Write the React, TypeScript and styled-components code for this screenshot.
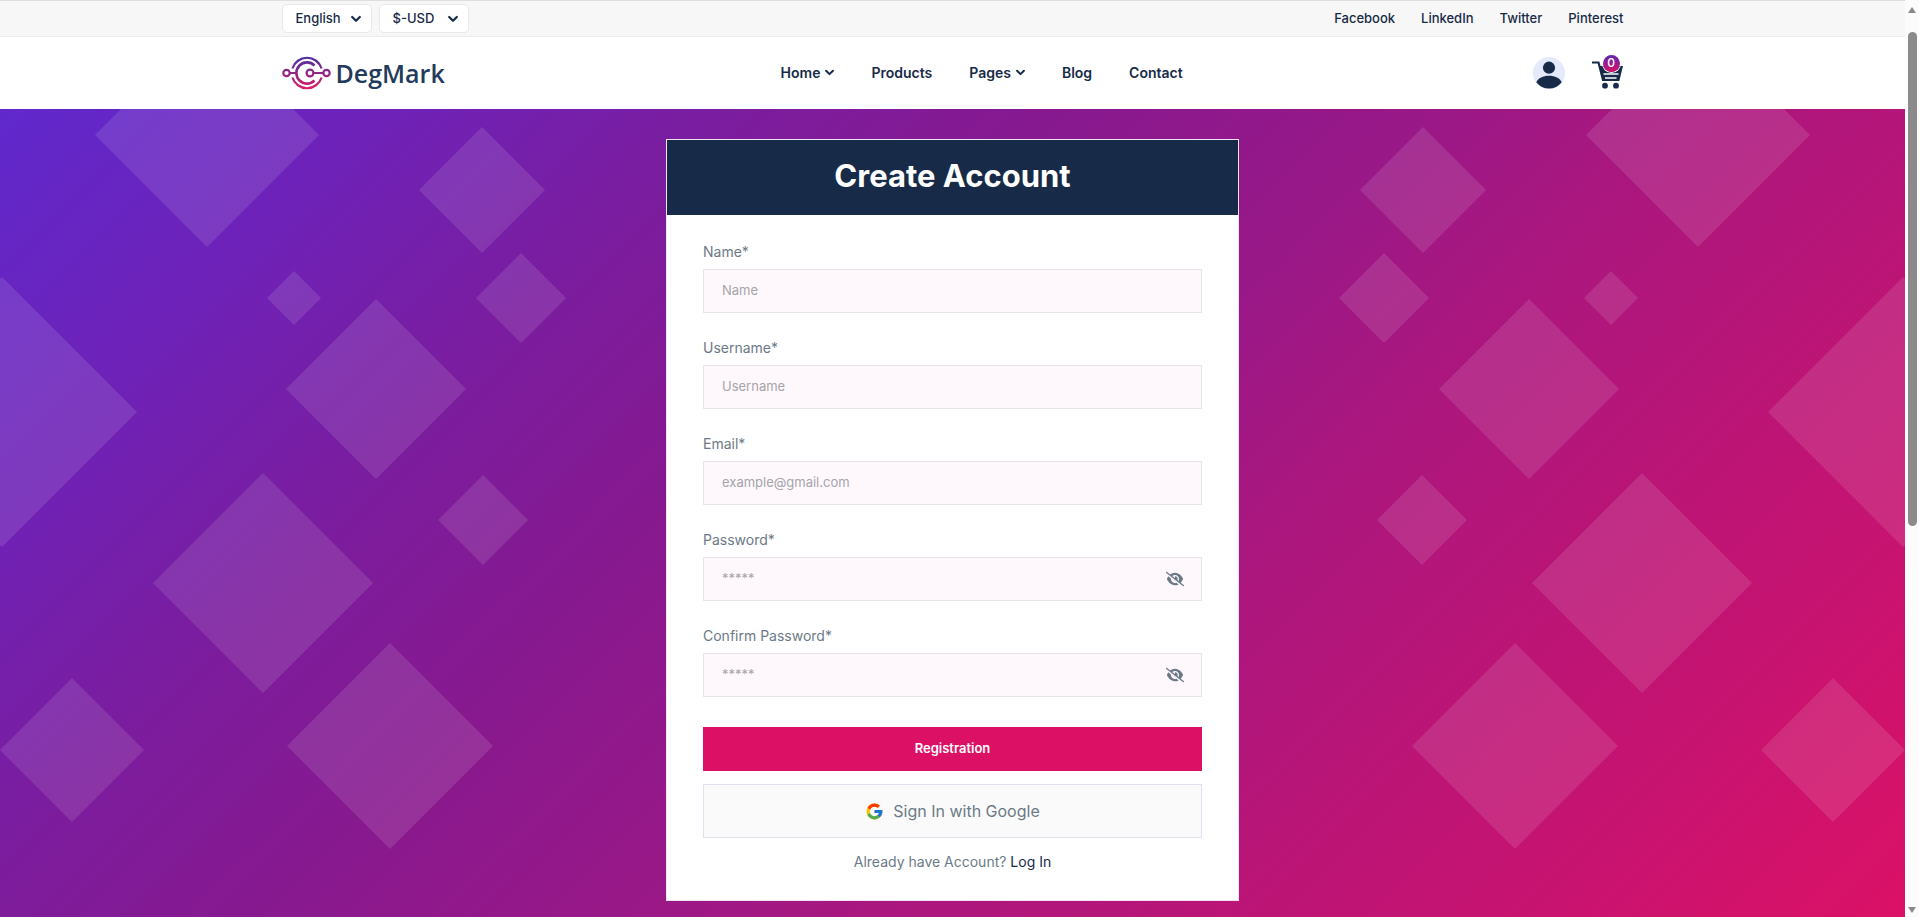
import React, { useState } from "react";
import styled, { createGlobalStyle } from "styled-components";
import { FcGoogle } from "react-icons/fc";
import { FaEyeSlash } from "react-icons/fa6";

const navy = "#172b48";
const grey = "#6c7a87";

const GlobalStyle = createGlobalStyle`
  *, *::before, *::after { box-sizing: border-box; }
  body {
    margin: 0;
    font-family: Inter, "Liberation Sans", sans-serif;
    color: ${navy};
    background: #fff;
  }
  a { color: inherit; text-decoration: none; }
  button, input, select { font-family: inherit; color: inherit; }
`;

const Frame = styled.div`
  display: grid;
  grid-template-columns: minmax(0, 1fr) 14px;
  height: 100vh;
  overflow: hidden;
`;

const Page = styled.div`
  overflow: hidden;
`;

const Container = styled.div`
  display: flex;
  align-items: center;
  justify-content: space-between;
  max-width: 1342px;
  height: 100%;
  margin: 0 auto;
`;

const TopBar = styled.div`
  height: 37px;
  background: #f7f7f7;
  border-top: 1px solid #dedede;
  border-bottom: 1px solid #ebebeb;
`;

const Selectors = styled.div`
  display: flex;
  gap: 7px;
`;

const SelectBox = styled.div`
  position: relative;
  display: flex;
  align-items: center;
`;

const Select = styled.select`
  appearance: none;
  width: 90px;
  height: 29px;
  padding: 0 13px 2px;
  border: 1px solid #e8e8e8;
  border-radius: 5px;
  background: #fff;
  font-size: 13px;
  font-weight: 500;
`;

const SelectArrow = styled.span`
  position: absolute;
  right: 11px;
  display: flex;
  pointer-events: none;
`;

const SocialLinks = styled.nav`
  display: flex;
  gap: 26px;
  padding-bottom: 2px;
  font-size: 13px;
  font-weight: 500;
`;

const Header = styled.header`
  height: 72px;
  background: #fff;
`;

const Actions = styled.div`
  display: flex;
  align-items: center;
  gap: 27px;
`;

const Brand = styled.a`
  display: flex;
  align-items: center;
  gap: 5px;
  font-family: "Open Sans", sans-serif;
  font-size: 25px;
  font-weight: 600;
  color: #223a5c;
`;

const MainNav = styled.nav`
  display: flex;
  gap: 37px;
  padding: 0 14px 2px 0;
`;

const NavLink = styled.a`
  display: flex;
  align-items: center;
  gap: 5px;
  font-size: 14px;
  font-weight: 600;
`;

const IconLink = styled.a`
  position: relative;
  display: flex;
`;

const CartBadge = styled.span`
  position: absolute;
  top: -2px;
  right: 4px;
  width: 17px;
  height: 17px;
  border-radius: 50%;
  background: linear-gradient(#5b27b5, #dc1166);
  box-shadow: 0 0 0 1px #fff;
  color: #fff;
  font-size: 12px;
  font-weight: 500;
  line-height: 16px;
  text-align: center;
`;

const Hero = styled.main`
  position: relative;
  display: flex;
  justify-content: center;
  padding: 30px 0;
  overflow: hidden;
  background: linear-gradient(
    135deg,
    #6028cc 0%,
    #6e22b8 14%,
    #7a1da0 26%,
    #87198f 39%,
    #9a1887 53%,
    #a9177f 61%,
    #b71578 72%,
    #c81370 86%,
    #dc1166 100%
  );
`;

const Shapes = styled.svg<{ $mirrored?: boolean }>`
  position: absolute;
  top: 0;
  ${(p) => (p.$mirrored ? "right: 0; transform: scaleX(-1);" : "left: 0;")}
  fill: rgba(255, 255, 255, 0.11);
`;

const Card = styled.section`
  position: relative;
  width: 573px;
  border: 1px solid #f0e3f3;
  background: #fff;
`;

const CardTitle = styled.h1`
  margin: 0;
  padding: 16px 0 19px;
  background: ${navy};
  color: #fff;
  font-size: 31px;
  font-weight: 700;
  line-height: 40px;
  text-align: center;
`;

const Form = styled.form`
  display: flex;
  flex-direction: column;
  padding: 25px 36px 26px;
`;

const Field = styled.div`
  display: flex;
  flex-direction: column;
  gap: 6px;
  margin-bottom: 23px;
`;

const Label = styled.label`
  color: ${grey};
  font-size: 14px;
  line-height: 23px;
`;

const InputBox = styled.div`
  position: relative;
  display: flex;
  align-items: center;
`;

const Input = styled.input`
  width: 100%;
  height: 44px;
  padding: 0 18px 2px;
  border: 1px solid #e6e6ea;
  border-radius: 0;
  background: #fef7fc;
  font-size: 13px;
  &::placeholder { color: #a5a5ab; opacity: 1; }
`;

const RevealButton = styled.button`
  position: absolute;
  right: 18px;
  display: flex;
  padding: 0;
  border: 0;
  background: none;
  color: ${grey};
`;

const SubmitButton = styled.button`
  height: 44px;
  margin: 7px 0 13px;
  padding: 0 0 2px;
  border: 0;
  background: #dc1166;
  color: #fff;
  font-size: 13px;
  font-weight: 600;
`;

const GoogleButton = styled.button`
  display: flex;
  align-items: center;
  justify-content: center;
  gap: 9px;
  height: 54px;
  margin-bottom: 12px;
  border: 1px solid #e0e0f0;
  background: #fafafa;
  color: ${grey};
  font-size: 16px;
`;

const LoginHint = styled.p`
  margin: 0;
  color: ${grey};
  font-size: 14px;
  line-height: 24px;
  text-align: center;
  a { color: ${navy}; }
`;

const ScrollRail = styled.div`
  display: flex;
  flex-direction: column;
  align-items: center;
  justify-content: space-between;
  padding: 7px 0 4px;
  background: #fcfcfc;
`;

const ScrollThumb = styled.div`
  width: 9px;
  height: 54.5%;
  margin: 19px 0 auto;
  border-radius: 5px;
  background: #8b8b8b;
`;

const diamonds = [
  [207, 26, 112],
  [482, 81, 63],
  [294, 189, 27],
  [521, 189, 45],
  [376, 280, 90],
  [2, 303, 135],
  [263, 474, 110],
  [483, 411, 45],
  [72, 641, 72],
  [390, 637, 103],
];

function DiamondField({ mirrored }: { mirrored?: boolean }) {
  return (
    <Shapes $mirrored={mirrored} width="620" height="830" viewBox="0 0 620 830" aria-hidden="true">
      {diamonds.map(([x, y, r]) => (
        <path key={`${x}-${y}`} d={`M${x} ${y - r}l${r} ${r}l${-r} ${r}l${-r} ${-r}z`} />
      ))}
    </Shapes>
  );
}

function Chevron({ size = 10 }: { size?: number }) {
  return (
    <svg width={size} height={size} viewBox="0 0 10 10" fill="none" stroke="currentColor" strokeWidth="2.2" aria-hidden="true">
      <path d="M1.200 3L5 6.800 8.800 3" strokeLinecap="round" strokeLinejoin="round" />
    </svg>
  );
}

function LogoMark() {
  return (
    <svg width="49" height="34" viewBox="0 0 49 34" fill="none" stroke="url(#brandGradient)" strokeWidth="2.2" aria-hidden="true">
      <defs>
        <linearGradient id="brandGradient" gradientUnits="userSpaceOnUse" x1="0" y1="1" x2="0" y2="33">
          <stop offset="0" stopColor="#4b2c9f" />
          <stop offset="1" stopColor="#dc1e6c" />
        </linearGradient>
      </defs>
      <path d="M10.4 12.5A15.3 15.3 0 0 1 39.6 12.5M10.4 21.5A15.3 15.3 0 0 0 39.6 21.5" />
      <path d="M32.5 9.5A10.6 10.6 0 1 0 32.5 24.5" strokeWidth="2.6" />
      <circle cx="4.5" cy="17" r="3.2" />
      <circle cx="28" cy="17" r="3.4" />
      <circle cx="44.5" cy="17" r="3.2" />
      <rect x="8" y="16" width="6" height="2" fill="url(#brandGradient)" stroke="none" />
      <rect x="31" y="16" width="10" height="2" fill="url(#brandGradient)" stroke="none" />
    </svg>
  );
}

function UserIcon() {
  return (
    <svg width="32" height="32" viewBox="0 0 32 32" aria-hidden="true">
      <circle cx="16" cy="16" r="16" fill="#e5e9fc" />
      <circle cx="16" cy="10.7" r="6.1" fill={navy} />
      <path d="M3.3 25.3C5.2 21 10 18.7 16 18.7S26.8 21 28.7 25.3A16 16 0 0 1 3.3 25.3Z" fill={navy} />
    </svg>
  );
}

function CartIcon() {
  return (
    <svg width="32" height="32" viewBox="0 0 32 32" aria-hidden="true">
      <path d="M0 5.5H6.5L11 23H27" fill="none" stroke={navy} strokeWidth="2.2" />
      <path d="M7.5 9H31L27.3 24H10.8Z" fill={navy} />
      <path d="M11.5 17H26.5M13 21H24.5" stroke="#fff" strokeWidth="1.4" />
      <circle cx="13" cy="28.7" r="2.9" fill={navy} />
      <circle cx="24" cy="28.7" r="2.9" fill={navy} />
    </svg>
  );
}

type FieldSpec = { id: string; label: string; placeholder: string; type: string };

const fields: FieldSpec[] = [
  { id: "name", label: "Name*", placeholder: "Name", type: "text" },
  { id: "username", label: "Username*", placeholder: "Username", type: "text" },
  { id: "email", label: "Email*", placeholder: "example@gmail.com", type: "email" },
  { id: "password", label: "Password*", placeholder: "*****", type: "password" },
  { id: "confirm", label: "Confirm Password*", placeholder: "*****", type: "password" },
];

function FormField({ id, label, placeholder, type }: FieldSpec) {
  const [visible, setVisible] = useState(false);
  const secret = type === "password";
  return (
    <Field>
      <Label htmlFor={id}>{label}</Label>
      <InputBox>
        <Input id={id} type={secret && visible ? "text" : type} placeholder={placeholder} />
        {secret && (
          <RevealButton type="button" aria-label="Toggle password visibility" onClick={() => setVisible(!visible)}>
            <FaEyeSlash size={18} />
          </RevealButton>
        )}
      </InputBox>
    </Field>
  );
}

export default function App() {
  return (
    <Frame>
      <GlobalStyle />
      <Page>
        <TopBar>
          <Container>
            <Selectors>
              <SelectBox>
                <Select aria-label="Language"><option>English</option></Select>
                <SelectArrow><Chevron /></SelectArrow>
              </SelectBox>
              <SelectBox>
                <Select aria-label="Currency"><option>$-USD</option></Select>
                <SelectArrow><Chevron /></SelectArrow>
              </SelectBox>
            </Selectors>
            <SocialLinks aria-label="Social">
              {["Facebook", "LinkedIn", "Twitter", "Pinterest"].map((name) => (
                <a key={name} href="#">{name}</a>
              ))}
            </SocialLinks>
          </Container>
        </TopBar>
        <Header>
          <Container>
            <Brand href="#"><LogoMark />DegMark</Brand>
            <MainNav aria-label="Main">
              <NavLink href="#">Home <Chevron size={9} /></NavLink>
              <NavLink href="#">Products</NavLink>
              <NavLink href="#">Pages <Chevron size={9} /></NavLink>
              <NavLink href="#">Blog</NavLink>
              <NavLink href="#">Contact</NavLink>
            </MainNav>
            <Actions>
              <IconLink href="#" aria-label="Account"><UserIcon /></IconLink>
              <IconLink href="#" aria-label="Cart"><CartIcon /><CartBadge>0</CartBadge></IconLink>
            </Actions>
          </Container>
        </Header>
        <Hero>
          <DiamondField />
          <DiamondField mirrored />
          <Card>
            <CardTitle>Create Account</CardTitle>
            <Form onSubmit={(e) => e.preventDefault()}>
              {fields.map((f) => <FormField key={f.id} {...f} />)}
              <SubmitButton type="submit">Registration</SubmitButton>
              <GoogleButton type="button"><FcGoogle size={19} />Sign In with Google</GoogleButton>
              <LoginHint>Already have Account? <a href="#">Log In</a></LoginHint>
            </Form>
          </Card>
        </Hero>
      </Page>
      <ScrollRail aria-hidden="true">
        <svg width="8" height="6" viewBox="0 0 8 6"><path d="M4 0l4 6H0z" fill="#8b8b8b" /></svg>
        <ScrollThumb />
        <svg width="8" height="6" viewBox="0 0 8 6"><path d="M4 6L0 0h8z" fill="#8b8b8b" /></svg>
      </ScrollRail>
    </Frame>
  );
}
